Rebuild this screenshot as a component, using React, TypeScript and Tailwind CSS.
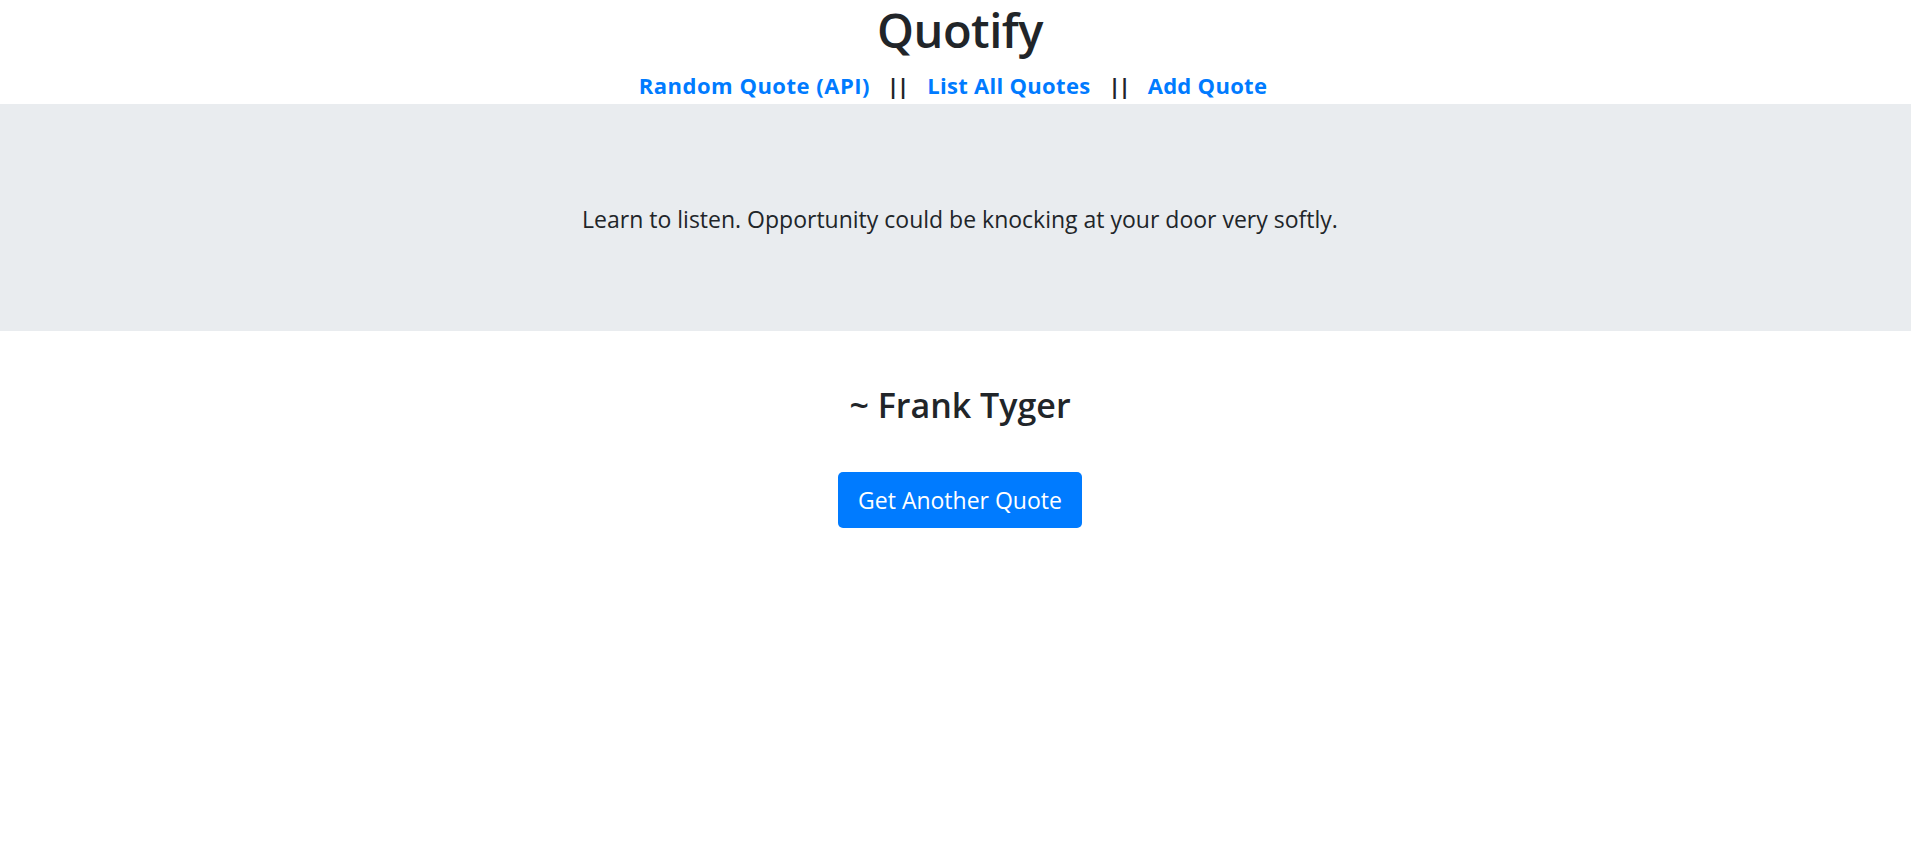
export default function App() {
  return (
    <div className="min-h-[848px] bg-white pl-[9px] text-[#212529] font-['Open_Sans','Noto_Sans',sans-serif]">
      <header className="flex flex-col items-center">
        <h1 className="text-[47px] font-semibold leading-[60px] tracking-[-0.5px]">Quotify</h1>
        <nav className="flex items-center pr-[14px] pt-[7px] text-[22px] font-bold leading-[37px]">
          <a href="#" className="text-[#007bff] tracking-[0.5px]">Random Quote (API)</a>
          <span className="ml-[17px] mr-[20px] tracking-[-2px]">||</span>
          <a href="#" className="text-[#007bff] tracking-[0.3px]">List All Quotes</a>
          <span className="ml-[18px] mr-[19px] tracking-[-2px]">||</span>
          <a href="#" className="text-[#007bff] tracking-[0.3px]">Add Quote</a>
        </nav>
      </header>

      <section className="-ml-[9px] flex h-[227px] items-center justify-center bg-[#e9ecef] pl-[9px] pt-[3px]">
        <p className="text-[23px]">Learn to listen. Opportunity could be knocking at your door very softly.</p>
      </section>

      <div className="flex flex-col items-center pt-[50px]">
        <h2 className="text-[34px] font-semibold leading-[48px]">~ Frank Tyger</h2>
        <button className="mt-[43px] h-[56px] rounded-[5px] bg-[#007bff] px-5 text-[23px] text-white">
          Get Another Quote
        </button>
      </div>
    </div>
  );
}
